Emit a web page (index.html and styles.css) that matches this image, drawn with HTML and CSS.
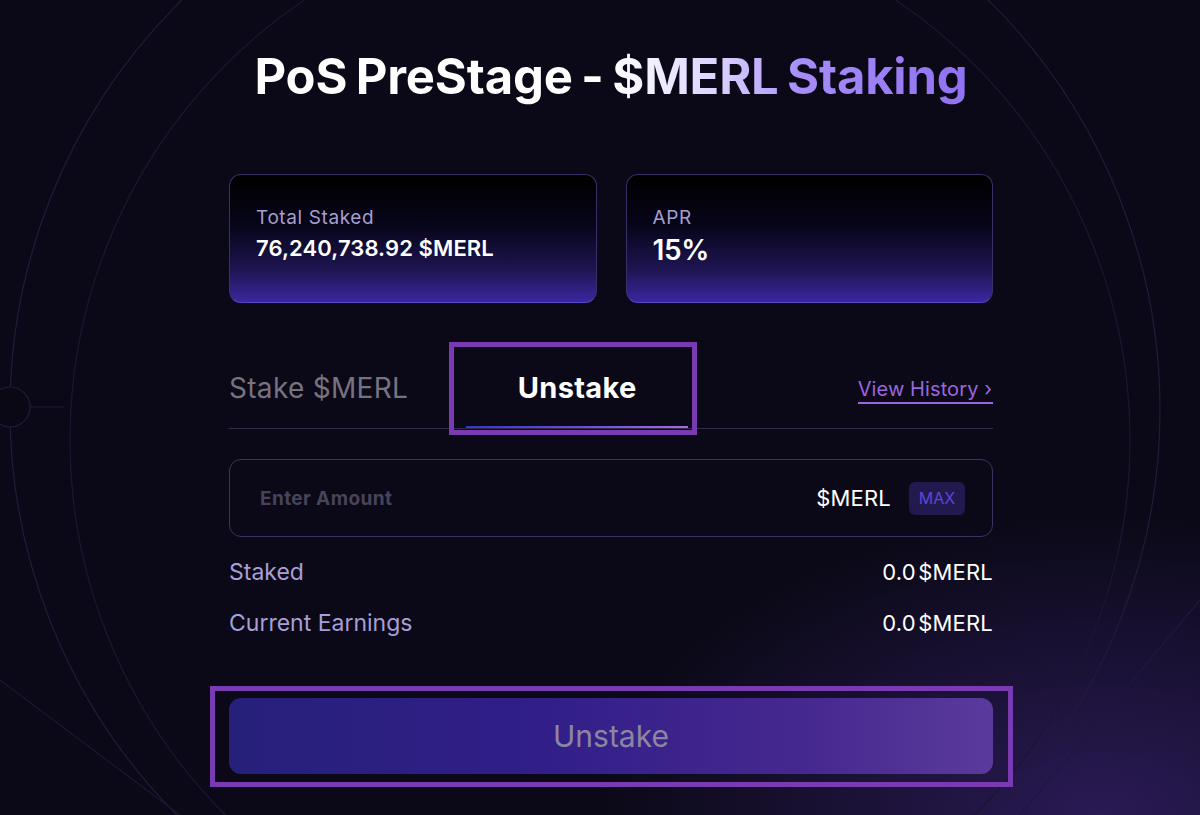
FILE: index.html
```html
<!DOCTYPE html>
<html lang="en">
<head>
  <meta charset="UTF-8" />
  <meta name="viewport" content="width=device-width, initial-scale=1.0"/>
  <title>PoS PreStage - $MERL Staking</title>
  <link rel="stylesheet" href="styles.css">
</head>
<body>

<svg class="bg-lines" width="1200" height="815" viewBox="0 0 1200 815">
  <circle cx="585" cy="410" r="575" fill="none" stroke="#221b3c" stroke-width="1.2"/>
  <circle cx="600" cy="440" r="530" fill="none" stroke="#1c1633" stroke-width="1.2"/>
  <line x1="0" y1="680" x2="180" y2="815" stroke="#1c1633" stroke-width="1.2"/>
  <line x1="30" y1="407" x2="64" y2="407" stroke="#221b3c" stroke-width="1.2"/>
  <circle cx="10" cy="407" r="20" fill="#0a0815" stroke="#221b3c" stroke-width="1.2"/>
  <line x1="1200" y1="600" x2="1020" y2="815" stroke="#1f1840" stroke-width="1.2"/>
</svg>

<div class="page">
  <h1 class="title">PoS PreStage - $MERL Staking</h1>

  <div class="stats">
    <div class="stat-card">
      <div class="stat-label">Total Staked</div>
      <div class="stat-value">76,240,738.92 $MERL</div>
    </div>
    <div class="stat-card">
      <div class="stat-label">APR</div>
      <div class="stat-value big">15%</div>
    </div>
  </div>

  <div class="tabs">
    <div class="tab">Stake $MERL</div>
    <div class="tab active">Unstake<span class="highlight tab-frame"></span></div>
    <a class="history" href="#">View History ›</a>
  </div>

  <div class="amount-box">
    <input type="text" placeholder="Enter Amount" />
    <span class="token">$MERL</span>
    <button class="max">MAX</button>
  </div>

  <div class="info">
    <div class="info-row">
      <span>Staked</span>
      <span class="val">0.0 $MERL</span>
    </div>
    <div class="info-row">
      <span>Current Earnings</span>
      <span class="val">0.0 $MERL</span>
    </div>
  </div>

  <div class="action">
    <span class="highlight btn-frame"></span>
    <button class="unstake-btn">Unstake</button>
  </div>
</div>

</body>
</html>
```

FILE: styles.css
```css
body {
  font-family: Inter, 'Noto Sans', sans-serif;
  background: radial-gradient(ellipse 500px 300px at 1100px 815px, #2a1a55 0%, rgba(20,12,45,0) 100%), #0b0917;
  color: #fff;
  margin: 0;
  padding: 0 0 0 22px;
  height: 815px;
  overflow: hidden;
}
.bg-lines {
  position: absolute;
  left: 0;
  top: 0;
}
.page {
  position: relative;
  width: 764px;
  margin: 0 auto;
}
.title {
  margin: 0;
  padding-top: 47px;
  height: 79px;
  text-align: center;
  font-size: 49px;
  font-weight: 700;
  letter-spacing: -0.2px;
  word-spacing: -3px;
  background: linear-gradient(90deg, #fff 0%, #fff 50%, #ddd3ff 64%, #a68cf8 75%, #8c6df1 100%);
  -webkit-background-clip: text;
  background-clip: text;
  color: transparent;
}
.stats {
  display: flex;
  gap: 29px;
  margin-top: 48px;
}
.stat-card {
  flex: 1;
  height: 129px;
  box-sizing: border-box;
  padding: 31px 26px 0;
  border-radius: 12px;
  border: 1px solid #3a3068;
  border-bottom-color: #5a42c8;
  background: linear-gradient(180deg, #000 0%, #07051a 40%, #1e1553 75%, #3a27a0 100%);
}
.stat-label {
  font-size: 19px;
  letter-spacing: 0.6px;
  color: #a79ed0;
}
.stat-value {
  margin-top: 6px;
  font-size: 22px;
  font-weight: 600;
  letter-spacing: 0.1px;
}
.stat-value.big {
  font-size: 28px;
  letter-spacing: -0.3px;
  margin-top: 4px;
}
.tabs {
  display: flex;
  align-items: center;
  margin-top: 39px;
  padding-top: 6px;
  height: 80px;
  border-bottom: 1px solid #332d48;
}
.tab {
  position: relative;
  font-size: 28px;
  color: #77727f;
  letter-spacing: 0.3px;
}
.tab.active {
  margin-left: 58px;
  width: 222px;
  height: 80px;
  line-height: 80px;
  text-align: center;
  color: #fff;
  font-size: 29px;
  font-weight: 700;
  letter-spacing: 0.3px;
  box-sizing: border-box;
  border-bottom: 2px solid transparent;
  border-image: linear-gradient(90deg, #3436c8, #6a4ad8 50%, #a070e0) 1;
}
.highlight {
  position: absolute;
  border: 5px solid #7a3bb2;
  pointer-events: none;
}
.tab-frame {
  left: -17px;
  right: -9px;
  top: -6px;
  bottom: -9px;
}
.history {
  margin-left: auto;
  margin-top: 5px;
  font-size: 20px;
  color: #9a66df;
  text-decoration: none;
  border-bottom: 2px solid #9a66df;
  padding: 0 1px 1px 0;
  letter-spacing: 0.1px;
}
.amount-box {
  display: flex;
  align-items: center;
  margin-top: 30px;
  height: 78px;
  box-sizing: border-box;
  padding: 0 27px 0 28px;
  border: 1px solid #3b3460;
  border-radius: 12px;
}
.amount-box input {
  flex: 1;
  background: none;
  border: none;
  outline: none;
  font-family: inherit;
  font-size: 19px;
  font-weight: 700;
  letter-spacing: 0.4px;
  color: #fff;
}
.amount-box input::placeholder {
  color: #47435a;
}
.token {
  font-size: 22px;
  margin-right: 18px;
  letter-spacing: 0.2px;
}
.max {
  width: 56px;
  height: 33px;
  border: none;
  border-radius: 6px;
  background: #221a4f;
  color: #5d45d6;
  font-family: inherit;
  font-size: 16px;
  padding: 0;
}
.info {
  margin-top: 9px;
}
.info-row {
  display: flex;
  justify-content: space-between;
  align-items: center;
  height: 51px;
  font-size: 23px;
  color: #a79fd6;
}
.info-row .val {
  color: #fff;
  font-size: 22px;
  letter-spacing: 0.2px;
  word-spacing: -4px;
}
.action {
  position: relative;
  margin-top: 50px;
}
.btn-frame {
  left: -19px;
  right: -20px;
  top: -12px;
  bottom: -13px;
}
.unstake-btn {
  display: block;
  width: 100%;
  height: 76px;
  border: none;
  border-radius: 12px;
  background: linear-gradient(90deg, #26207a 0%, #311e88 40%, #45288f 75%, #5a3b9c 100%);
  color: #8c86a0;
  font-family: inherit;
  font-size: 30px;
  letter-spacing: 0;
}
```
